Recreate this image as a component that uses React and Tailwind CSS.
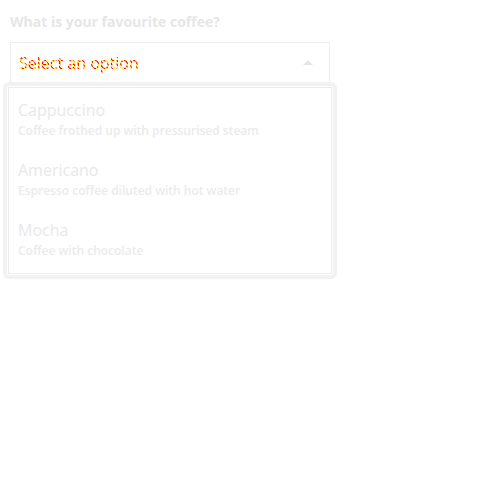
import React from 'react';

const options = [
  { title: 'Cappuccino', desc: 'Coffee frothed up with pressurised steam' },
  { title: 'Americano', desc: 'Espresso coffee diluted with hot water' },
  { title: 'Mocha', desc: 'Coffee with chocolate' },
];

export default function App() {
  return (
    <div className="w-[500px] h-[500px] bg-white font-['Open_Sans',sans-serif]">
      <div className="pt-[12px] pl-[10px] w-[330px]">
        <label className="block text-[14px] font-bold leading-[20px] text-[#e6e6e6]">
          What is your favourite coffee?
        </label>
        <div className="relative mt-[10px]">
          {/* Select box */}
          <div className="flex items-center justify-between h-[41px] px-[8px] border border-[#eeeeee] bg-white">
            <span className="text-[16px] leading-[22px] text-transparent bg-clip-text bg-[repeating-linear-gradient(45deg,#ff0000_0_1.5px,#ffee00_1.5px_3px)]">
              Select an option
            </span>
            <svg width="12" height="8" viewBox="0 0 12 8" className="mr-[7px] -mt-[2px]">
              <path d="M1 7 L6 2 L11 7 Z" fill="#e6e6e6" />
            </svg>
          </div>
          {/* Dropdown */}
          <div className="absolute left-[-7px] top-[40px] w-[334px] rounded-[6px] bg-[#f2f2f2] p-[4px]">
            <div className="bg-white rounded-[2px] p-[1px]">
              <div className="border border-[#ececec] bg-white pt-[2px] pb-[3px]">
                {options.map((o) => (
                  <div key={o.title} className="px-[9px] h-[60px] flex flex-col justify-center">
                    <div className="text-[16px] leading-[22px] -mt-[1px] text-[#e8e8e8]">{o.title}</div>
                    <div className="text-[12px] font-semibold leading-[18px] mt-[1px] text-[#ebebeb]">{o.desc}</div>
                  </div>
                ))}
              </div>
            </div>
          </div>
        </div>
      </div>
    </div>
  );
}
